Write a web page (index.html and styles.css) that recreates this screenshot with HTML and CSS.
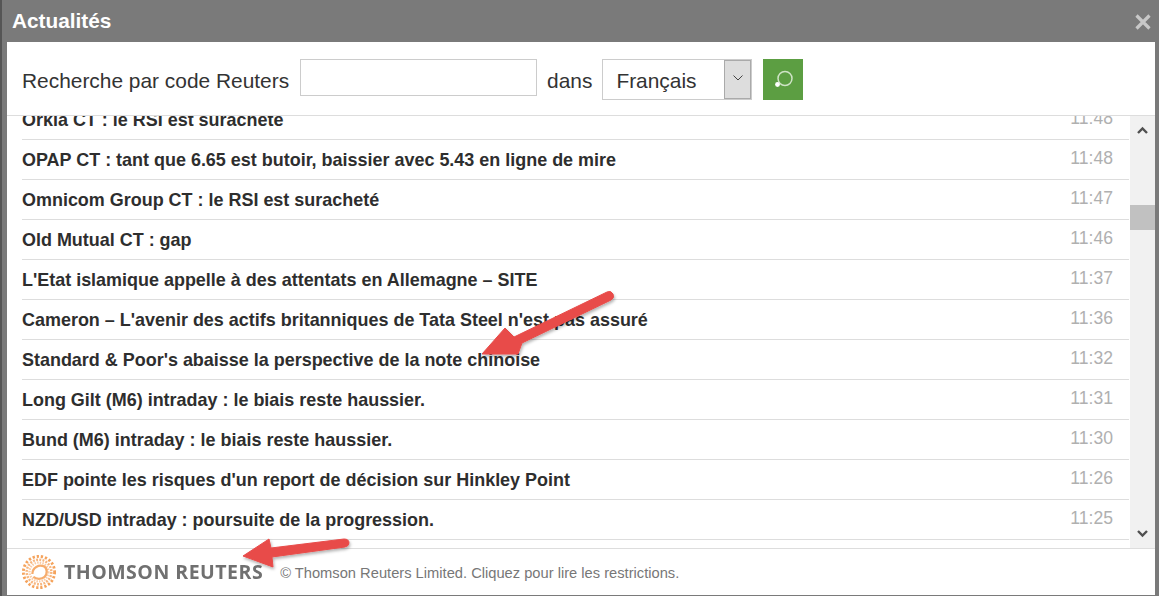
FILE: index.html
```html
<!DOCTYPE html>
<html lang="fr">
<head>
<meta charset="utf-8">
<title>Actualités</title>
<link rel="stylesheet" href="styles.css">
</head>
<body>
<div class="dialog">
  <header class="titlebar">
    <h1 class="title">Actualités</h1>
    <svg class="close" width="16" height="16" viewBox="0 0 16 16"><path d="M1.5 1.5 14.5 14.5M14.5 1.5 1.5 14.5" stroke="#c8c8c8" stroke-width="3.2" fill="none"/></svg>
  </header>
  <div class="panel">
    <form class="search">
      <label class="search-label">Recherche par code Reuters</label>
      <div class="search-input"></div>
      <span class="search-label">dans</span>
      <div class="select">
        <span class="select-value">Français</span>
        <span class="select-btn"><svg width="10" height="6" viewBox="0 0 10 6"><path d="M.5.5 5 5 9.5.5" stroke="#444" fill="none"/></svg></span>
      </div>
      <div class="go">
        <svg width="22" height="22" viewBox="0 0 22 22"><circle cx="13" cy="9.5" r="7" stroke="#cfe3c6" stroke-width="1.5" fill="none"/><circle cx="5.5" cy="15.5" r="2.4" fill="#fff"/></svg>
      </div>
    </form>
    <div class="news">
      <ul class="list">
        <li class="row first"><span class="headline">Orkla CT : le RSI est suracheté</span><span class="time">11:48</span></li>
        <li class="row"><span class="headline">OPAP CT : tant que 6.65 est butoir, baissier avec 5.43 en ligne de mire</span><span class="time">11:48</span></li>
        <li class="row"><span class="headline">Omnicom Group CT : le RSI est suracheté</span><span class="time">11:47</span></li>
        <li class="row"><span class="headline">Old Mutual CT : gap</span><span class="time">11:46</span></li>
        <li class="row"><span class="headline">L'Etat islamique appelle à des attentats en Allemagne – SITE</span><span class="time">11:37</span></li>
        <li class="row"><span class="headline">Cameron – L'avenir des actifs britanniques de Tata Steel n'est pas assuré</span><span class="time">11:36</span></li>
        <li class="row"><span class="headline">Standard &amp; Poor's abaisse la perspective de la note chinoise</span><span class="time">11:32</span></li>
        <li class="row"><span class="headline">Long Gilt (M6) intraday : le biais reste haussier.</span><span class="time">11:31</span></li>
        <li class="row"><span class="headline">Bund (M6) intraday : le biais reste haussier.</span><span class="time">11:30</span></li>
        <li class="row"><span class="headline">EDF pointe les risques d'un report de décision sur Hinkley Point</span><span class="time">11:26</span></li>
        <li class="row"><span class="headline">NZD/USD intraday : poursuite de la progression.</span><span class="time">11:25</span></li>
      </ul>
      <div class="scrollbar">
        <svg class="sb-arrow" width="25" height="25" viewBox="0 0 25 25"><path d="M8 17 12.5 12.5 17 17" stroke="#505050" stroke-width="2.4" fill="none"/></svg>
        <div class="sb-track"><div class="sb-thumb"></div></div>
        <svg class="sb-arrow" width="25" height="25" viewBox="0 0 25 25"><path d="M8 8 12.5 12.5 17 8" stroke="#505050" stroke-width="2.4" fill="none"/></svg>
      </div>
    </div>
    <footer class="footer">
      <svg class="logo-mark" width="36" height="36" viewBox="0 0 38 38">
        <g fill="none" stroke="#f5a35c">
          <circle cx="19" cy="19" r="16.5" stroke-width="3" stroke-dasharray="2.4 2"/>
          <circle cx="19" cy="19" r="13" stroke-width="2.6" stroke-dasharray="2 1.4" opacity=".8"/>
          <circle cx="19" cy="19" r="10" stroke-width="2.4" stroke-dasharray="1.6 1.2" opacity=".55"/>
          <path d="M12 21C12 14 19 11 24 13 28 15 28 21 25 24 22 27 16 27 13 24" stroke-width="2.4" opacity=".9"/>
        </g>
      </svg>
      <span class="logo-text">THOMSON REUTERS</span>
      <span class="legal">© Thomson Reuters Limited. Cliquez pour lire les restrictions.</span>
    </footer>
  </div>
  <svg class="annotations" width="1159" height="596" viewBox="0 0 1159 596">
    <defs><filter id="sh" x="-20%" y="-20%" width="140%" height="140%"><feDropShadow dx="1" dy="2" stdDeviation="1.5" flood-color="#000" flood-opacity=".3"/></filter></defs>
    <g fill="#e84c4a" stroke="#e84c4a" stroke-linejoin="round" filter="url(#sh)">
      <path d="M482 354 505 328 514 337 607 292Q611 290 613 294 615 298 611 300L522 343 518 354Z" stroke-width="1"/>
      <path d="M243 556 269 539 271 548 344 539Q349 539 349 543 349 546 345 547L272 557 273 567Z" stroke-width="1"/>
    </g>
  </svg>
</div>
</body>
</html>
```

FILE: styles.css
```css
* { box-sizing: border-box; }
html, body { margin: 0; padding: 0; background: #fff; }
body { width: 1159px; height: 596px; overflow: hidden; font-family: "Liberation Sans", Arial, sans-serif; }
.dialog { position: relative; width: 1159px; height: 596px; background: #7a7a7a; border-left: 2px solid #555; display: flex; flex-direction: column; padding-bottom: 1px; }
.titlebar { height: 42px; flex: none; display: flex; align-items: center; justify-content: space-between; padding: 0 8px 0 10px; }
.title { margin: 0; font-size: 20.8px; font-weight: bold; color: #fff; }
.close { display: block; margin-top: 1px; }
.panel { flex: 1; margin: 0 4px 0 5px; background: #fff; display: flex; flex-direction: column; min-height: 0; }
.search { height: 74px; flex: none; display: flex; align-items: flex-start; padding: 17px 0 0 15px; border-bottom: 1px solid #ddd; }
.search-label { font-size: 20.9px; line-height: 44px; color: #333; }
.search-input { width: 237px; height: 37px; border: 1px solid #ccc; margin: 0 10px 0 11px; }
.select { width: 150px; height: 41px; border: 1px solid #ccc; display: flex; margin-left: 10px; }
.select-value { flex: 1; font-size: 20.9px; line-height: 42px; padding-left: 13px; color: #333; }
.select-btn { width: 27px; background: #ddd; border: 1px solid #aaa; display: flex; align-items: center; justify-content: center; padding-bottom: 4px; }
.go { width: 40px; height: 41px; background: #5c9e42; margin-left: 11px; display: flex; align-items: center; justify-content: center; }
.news { height: 432px; flex: none; display: flex; overflow: hidden; }
.list { flex: 1; list-style: none; margin: 0 1px 0 0; padding: 0 0 0 15px; overflow: hidden; }
.row { height: 40px; border-bottom: 1px solid #ddd; display: flex; align-items: center; justify-content: space-between; padding-right: 16px; }
.row.first { margin-top: -16px; }
.headline { font-size: 17.97px; font-weight: bold; color: #2e2e2e; padding-top: 2px; }
.time { font-size: 17.6px; color: #b0b0b0; padding-bottom: 3px; }
.scrollbar { width: 25px; flex: none; background: #f1f1f1; display: flex; flex-direction: column; }
.sb-arrow { display: block; flex: none; }
.sb-track { flex: 1; padding-top: 64px; }
.sb-thumb { height: 25px; background: #c1c1c1; }
.footer { flex: 1; border-top: 1px solid #ddd; display: flex; align-items: center; padding-left: 14px; }
.logo-mark { display: block; flex: none; filter: blur(.35px); }
.logo-text { font-family: "Open Sans", sans-serif; font-size: 19.5px; font-weight: 700; letter-spacing: .5px; color: #707070; margin-left: 7px; padding-bottom: 2px; filter: blur(.5px); }
.legal { font-size: 14.7px; color: #777; margin-left: 17px; padding-top: 2px; }
.annotations { position: absolute; left: -2px; top: 0; pointer-events: none; }
```
